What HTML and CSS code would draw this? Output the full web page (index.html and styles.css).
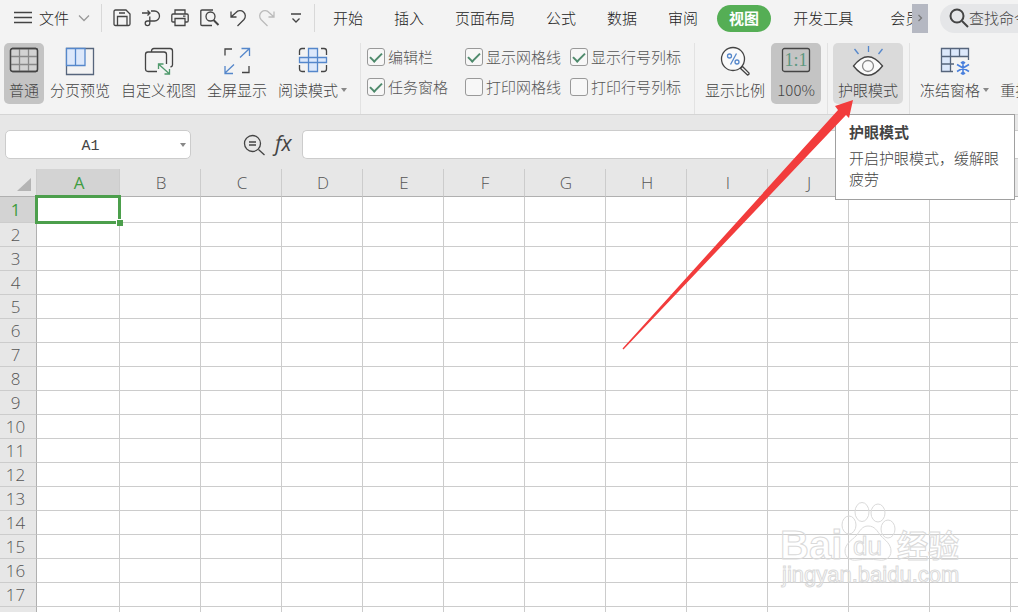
FILE: index.html
```html
<!DOCTYPE html>
<html lang="zh-CN">
<head>
<meta charset="utf-8">
<title>表格</title>
<link rel="stylesheet" href="styles.css">
</head>
<body>
<header class="topbar">
  <button class="file-menu" type="button">
    <svg class="burger" viewBox="0 0 20 20"><path d="M1 4.500h18M1 9.500h18M1 14.500h18"/></svg>
    <span>文件</span>
    <svg class="chevron" viewBox="0 0 12 12"><path d="M1 3.500l5 5 5-5"/></svg>
  </button>
  <div class="quick">
    <button type="button" aria-label="保存"><svg viewBox="0 0 20 20"><path d="M3.500 2h10.500l4 4v10q0 1.500-1.500 1.500h-13q-1.500 0-1.500-1.500V3.500Q2 2 3.500 2zM5.500 17.500V8.500h9.500v9M7 5h6"/></svg></button>
    <button type="button" aria-label="输出"><svg viewBox="0 0 20 20"><path d="M1 5h8M6.500 2.500L9 5 6.500 7.500M10 3h3.500a4.700 4.700 0 0 1 0 10H6.500a2.300 2.300 0 1 0 2.300 2.300V8.500"/></svg></button>
    <button type="button" aria-label="打印"><svg viewBox="0 0 20 20"><path d="M5 6V2h10v4M5 14H3q-1.200 0-1.200-1.200V7.200Q1.800 6 3 6h14q1.200 0 1.200 1.200v5.600Q18.200 14 17 14h-2M5 10.500h10V17.500H5zM13 8.200h2.500"/></svg></button>
    <button type="button" aria-label="打印预览"><svg viewBox="0 0 20 20"><path d="M14 2H3q-1.200 0-1.200 1.200v13q0 1.300 1.200 1.300h10"/><circle cx="11.500" cy="8.500" r="4.500"/><path d="M14.500 12l5 5" stroke-width="2"/></svg></button>
    <button type="button" aria-label="撤销"><svg viewBox="0 0 20 20"><path d="M3 3.500v5.500h5.500M3 9L8 4.500a5.200 5.200 0 0 1 8 7l-6.500 6.500"/></svg></button>
    <button class="off" type="button" aria-label="恢复"><svg viewBox="0 0 20 20"><path d="M17 3.500v5.500h-5.500M17 9L12 4.500a5.200 5.200 0 0 0-8 7l6.500 6.500"/></svg></button>
    <button type="button" aria-label="更多"><svg viewBox="0 0 20 20"><path d="M5 6h10M6.500 10.500l3.500 3.500 3.500-3.500"/></svg></button>
  </div>
  <nav class="tabs">
    <button type="button">开始</button>
    <button type="button">插入</button>
    <button type="button">页面布局</button>
    <button type="button">公式</button>
    <button type="button">数据</button>
    <button type="button">审阅</button>
    <button class="active" type="button">视图</button>
    <button class="wide" type="button">开发工具</button>
    <button class="wide" type="button">会员</button>
  </nav>
  <button class="tab-scroll" type="button" aria-label="向右滚动"><svg viewBox="0 0 16 16"><path d="M6.500 5l3 3-3 3"/></svg></button>
  <label class="search">
    <svg viewBox="0 0 20 20"><circle cx="8" cy="8" r="6.500"/><path d="M13 13l6 6"/></svg>
    <input type="text" value="查找命令" aria-label="查找命令">
  </label>
</header>

<section class="ribbon">
  <button class="tool pressed normal" type="button">
    <svg viewBox="0 0 32 32"><rect class="lt" x="2.500" y="2.500" width="27" height="23" rx="2"/><path class="thin" d="M11.500 3v22M20.500 3v22M3 10.500h26M3 18.500h26"/><rect x="2.500" y="2.500" width="27" height="23" rx="2"/></svg>
    <span>普通</span>
  </button>
  <button class="tool" type="button">
    <svg viewBox="0 0 32 32"><path class="slate" d="M2.500 2.500h27v26h-27z"/><path class="blue fill" d="M2.500 2.500h18.500v17H2.500zM11.500 2.500v17"/></svg>
    <span>分页预览</span>
  </button>
  <button class="tool" type="button">
    <svg viewBox="0 0 32 32"><path d="M8.500 6V5q0-2.500 2.500-2.500h16q2.500 0 2.500 2.500v14q0 1.500-2 2M14 25.500H5q-2.500 0-2.500-2.500V8.500Q2.500 6 5 6h16q2.500 0 2.500 2.500V18"/><path class="green" d="M16 18.500l10 9M15.500 23v-5h5M26.500 23v5h-5"/></svg>
    <span>自定义视图</span>
  </button>
  <button class="tool" type="button">
    <svg viewBox="0 0 32 32"><path d="M4 9.500V3h7M28 20v6.500h-7"/><path class="blue" d="M19 11.500L28 3M20.500 2.500h8V10M13 18.500L4 27M4 20v7.500h8"/></svg>
    <span>全屏显示</span>
  </button>
  <button class="tool" type="button">
    <svg viewBox="0 0 32 32"><path d="M2.500 9V5q0-2.500 2.500-2.500h3M24 2.500h3q2.500 0 2.500 2.500v4M29.500 19v4q0 2.500-2.500 2.500h-3M8 25.500H5q-2.500 0-2.500-2.500v-4"/><path class="blue fill" d="M11.500 2.500h9v23h-9zM2.500 11.500h27v5h-27zM11.500 11.500v5M20.500 11.500v5"/></svg>
    <span class="drop">阅读模式</span>
  </button>
  <i class="sep first"></i>
  <div class="checks">
    <label><input type="checkbox" checked>编辑栏</label>
    <label><input type="checkbox" checked>显示网格线</label>
    <label><input type="checkbox" checked>显示行号列标</label>
    <label><input type="checkbox" checked>任务窗格</label>
    <label><input type="checkbox">打印网格线</label>
    <label><input type="checkbox">打印行号列标</label>
  </div>
  <i class="sep"></i>
  <button class="tool" type="button">
    <svg viewBox="0 0 32 32"><circle class="lt" cx="14" cy="13" r="11.500"/><path d="M21.500 22.500l2-2 6.500 6.500q.5 1.500-1.500 2z"/><path class="blue" d="M17.500 7.500l-6 11"/><circle class="blue" cx="10.500" cy="10" r="2"/><circle class="blue" cx="18" cy="16" r="2"/></svg>
    <span>显示比例</span>
  </button>
  <button class="tool pressed ratio" type="button">
    <svg viewBox="0 0 32 32"><rect x="2.500" y="2.500" width="27" height="23" rx="2"/><text x="16" y="20" text-anchor="middle">1:1</text></svg>
    <span>100%</span>
  </button>
  <i class="sep"></i>
  <div class="tip-anchor">
    <button class="tool hover" type="button" aria-describedby="eye-tip">
      <svg viewBox="0 0 32 32"><path class="lt" d="M1.500 20Q16 1.500 30.500 20 16 38.500 1.500 20z"/><circle class="thin" cx="16" cy="20" r="5.500"/><path class="blue" d="M16.500 0v6M2.500 3l4 5M30.500 3l-4 5"/></svg>
      <span>护眼模式</span>
    </button>
    <div class="tip" id="eye-tip" role="tooltip"><b>护眼模式</b><p>开启护眼模式，缓解眼疲劳</p></div>
  </div>
  <i class="sep"></i>
  <button class="tool" type="button">
    <svg viewBox="0 0 32 32"><path class="blue fill nostroke" d="M3 3h26v7H11v15H3z"/><path class="slate" d="M14 25.500H2.500v-23h27V14M11.500 3v22M20.500 3v8M3 10.500h26M3 18h12"/><path class="snow" d="M24 15v14M18 18.500l12 7M18 25.500l12-7M22 16l2 2 2-2M22 28l2-2 2 2"/></svg>
    <span class="drop">冻结窗格</span>
  </button>
  <button class="tool" type="button">
    <svg viewBox="0 0 32 32"></svg>
    <span>重排窗口</span>
  </button>
</section>

<section class="formula">
  <label class="name-box"><input type="text" value="A1" aria-label="名称框"></label>
  <button type="button" aria-label="查找"><svg viewBox="0 0 22 22"><circle cx="9.500" cy="9.500" r="8"/><path d="M15.500 15.500l6 5.500M6 8h7M6 11h7"/></svg></button>
  <button class="fx" type="button">fx</button>
  <input class="formula-input" type="text" aria-label="编辑栏">
</section>

<main class="sheet">
  <table>
    <colgroup><col class="c-row"><col class="c-first"><col span="12" class="c-std"></colgroup>
    <thead>
      <tr><th class="corner"><svg viewBox="0 0 14 13"><path d="M14 0v13H0z"/></svg></th><th class="sel">A</th><th>B</th><th>C</th><th>D</th><th>E</th><th>F</th><th>G</th><th>H</th><th>I</th><th>J</th><th></th><th></th><th></th></tr>
    </thead>
    <tbody>
      <tr><th class="sel">1</th><td class="cursor"></td><td></td><td></td><td></td><td></td><td></td><td></td><td></td><td></td><td></td><td></td><td></td><td></td></tr>
      <tr><th>2</th><td></td><td></td><td></td><td></td><td></td><td></td><td></td><td></td><td></td><td></td><td></td><td></td><td></td></tr>
      <tr><th>3</th><td></td><td></td><td></td><td></td><td></td><td></td><td></td><td></td><td></td><td></td><td></td><td></td><td></td></tr>
      <tr><th>4</th><td></td><td></td><td></td><td></td><td></td><td></td><td></td><td></td><td></td><td></td><td></td><td></td><td></td></tr>
      <tr><th>5</th><td></td><td></td><td></td><td></td><td></td><td></td><td></td><td></td><td></td><td></td><td></td><td></td><td></td></tr>
      <tr><th>6</th><td></td><td></td><td></td><td></td><td></td><td></td><td></td><td></td><td></td><td></td><td></td><td></td><td></td></tr>
      <tr><th>7</th><td></td><td></td><td></td><td></td><td></td><td></td><td></td><td></td><td></td><td></td><td></td><td></td><td></td></tr>
      <tr><th>8</th><td></td><td></td><td></td><td></td><td></td><td></td><td></td><td></td><td></td><td></td><td></td><td></td><td></td></tr>
      <tr><th>9</th><td></td><td></td><td></td><td></td><td></td><td></td><td></td><td></td><td></td><td></td><td></td><td></td><td></td></tr>
      <tr><th>10</th><td></td><td></td><td></td><td></td><td></td><td></td><td></td><td></td><td></td><td></td><td></td><td></td><td></td></tr>
      <tr><th>11</th><td></td><td></td><td></td><td></td><td></td><td></td><td></td><td></td><td></td><td></td><td></td><td></td><td></td></tr>
      <tr><th>12</th><td></td><td></td><td></td><td></td><td></td><td></td><td></td><td></td><td></td><td></td><td></td><td></td><td></td></tr>
      <tr><th>13</th><td></td><td></td><td></td><td></td><td></td><td></td><td></td><td></td><td></td><td></td><td></td><td></td><td></td></tr>
      <tr><th>14</th><td></td><td></td><td></td><td></td><td></td><td></td><td></td><td></td><td></td><td></td><td></td><td></td><td></td></tr>
      <tr><th>15</th><td></td><td></td><td></td><td></td><td></td><td></td><td></td><td></td><td></td><td></td><td></td><td></td><td></td></tr>
      <tr><th>16</th><td></td><td></td><td></td><td></td><td></td><td></td><td></td><td></td><td></td><td></td><td></td><td></td><td></td></tr>
      <tr><th>17</th><td></td><td></td><td></td><td></td><td></td><td></td><td></td><td></td><td></td><td></td><td></td><td></td><td></td></tr>
      <tr><th></th><td></td><td></td><td></td><td></td><td></td><td></td><td></td><td></td><td></td><td></td><td></td><td></td><td></td></tr>
    </tbody>
  </table>
  <svg class="watermark" viewBox="0 0 190 92" role="img" aria-label="Baidu">
    <g><ellipse cx="73" cy="35" rx="7" ry="9"/><ellipse cx="86" cy="22" rx="7" ry="9.500"/><ellipse cx="102" cy="23" rx="7" ry="9"/><ellipse cx="112" cy="39" rx="7" ry="9"/><path d="M92 36c7 0 9 5 13 10 4 4 10 8 10 15 0 7-6 10-12 9-8-1-14-1-22 0-6 1-12-2-12-9 0-7 7-11 11-15 4-5 6-10 12-10z"/></g>
    <text x="4" y="69" class="w-big">Bai</text>
    <text x="77" y="65" class="w-du">du</text>
    <text x="121" y="67" class="w-cn">经验</text>
    <text x="6" y="92" class="w-url">jingyan.baidu.com</text>
  </svg>
</main>
<svg class="arrow" viewBox="0 0 232 252" aria-hidden="true"><path d="M231 1l-18 6 3 4L.5 249.500l1 1L224 16l3 3z"/></svg>
</body>
</html>
```

FILE: styles.css
```css
* { box-sizing: border-box; }
body {
  margin: 0;
  height: 100vh;
  overflow: hidden;
  position: relative;
  display: flex;
  flex-direction: column;
  background: #fff;
  color: #444;
  font: 300 15px/20px "Noto Sans CJK SC", sans-serif;
}
button, input { font: inherit; color: inherit; }
button { border: 0; padding: 0; background: none; white-space: nowrap; }
svg { fill: none; stroke: #444; stroke-width: 1.3; display: block; flex: none; overflow: visible; }

.topbar { display: flex; align-items: center; height: 38px; flex: none; padding-bottom: 2px; background: #f3f3f3; }
.file-menu { display: flex; align-items: center; gap: 6px; padding: 0 11px 0 13px; height: 28px; color: #222; border-right: 1px solid #d8d8d8; }
.burger { width: 20px; height: 20px; }
.chevron { width: 12px; height: 12px; margin-left: 3px; stroke: #999; }
.quick { display: flex; align-items: center; gap: 9px; height: 28px; padding: 0 8px 0 10px; border-right: 1px solid #d8d8d8; }
.quick svg { width: 20px; height: 20px; }
.off svg { stroke: #bbb; }
.tabs { display: flex; gap: 7px; flex: 1; min-width: 0; overflow: hidden; padding-left: 6px; color: #222; }
.tabs button { padding: 0 12px; height: 27px; border-radius: 14px; flex: none; }
.tabs .active { background: #55ae55; color: #fff; font-weight: 700; }
.tabs .wide { padding: 0 15px; }
.tab-scroll { width: 16px; height: 29px; background: #b5b8c2; flex: none; }
.tab-scroll svg { stroke: #777; width: 16px; height: 16px; }
.search { display: flex; align-items: center; flex: none; width: 78px; height: 29px; margin-left: 12px; padding-left: 9px; background: #e5e6e8; border-radius: 15px 0 0 15px; }
.search svg { width: 20px; height: 20px; stroke-width: 2; }
.search input { width: 49px; min-width: 0; border: 0; padding: 0; background: none; }

.ribbon { display: flex; gap: 1px; height: 77px; flex: none; padding: 5px 0 0 4px; background: #f3f3f3; border-bottom: 1px solid #d5d5d5; }
.tool { display: flex; flex-direction: column; align-items: center; gap: 2px; flex: none; height: 61px; padding: 3px 5px 0; border-radius: 5px; }
.tool svg { width: 32px; height: 32px; }
.tool .lt { fill: #fafafa; }
.tool .thin { stroke: #888; }
.tool .slate { stroke: #56657c; }
.tool .blue { stroke: #5587cb; }
.tool .fill { fill: #dce8fb; }
.tool .nostroke { stroke: none; }
.tool .green { stroke: #4f9a6c; }
.tool .snow { stroke: #4a80dd; stroke-width: 1.6; }
.tool text { fill: #5c9880; stroke: none; font: 18px "Liberation Serif", serif; }
.pressed { background: #c4c4c4; }
.tool.pressed .lt { fill: #d2d2d2; }
.hover { background: #dadada; }
.normal { width: 40px; }
.ratio { width: 50px; }
.drop { display: flex; align-items: center; gap: 3px; }
.drop::after, .name-box::after { content: ""; border: 3px solid transparent; border-top: 4px solid #888; border-bottom: 0; }
.sep { width: 1px; flex: none; height: 71px; margin: 0 4px 0 5px; background: #e2e2e2; }
.sep.first { margin-left: 7px; }
.checks { display: grid; grid-template-columns: 98px 105px max-content; grid-auto-rows: 30px; flex: none; height: 60px; margin-top: -1px; padding: 0 7px 0 1px; color: #555; }
.checks label { display: flex; align-items: center; gap: 3px; white-space: nowrap; }
.checks input { appearance: none; width: 18px; height: 18px; margin: 0; border: 1px solid #999; border-radius: 3px; background: #f7f7f7; display: grid; place-content: center; }
.checks input:checked::after { content: ""; width: 10px; height: 5px; border: solid #4e8a6c; border-width: 0 0 2px 2px; transform: rotate(-45deg) translate(1px, -1px); }

.tip-anchor { position: relative; flex: none; }
.tip { position: absolute; z-index: 2; left: 2px; top: 71px; width: 180px; padding: 6px 13px 10px; background: #fff; border: 1px solid #a0a0a0; line-height: 21px; }
.tip b { font-weight: 700; }
.tip p { margin: 5px 0 0; }

.formula { display: flex; align-items: center; height: 54px; flex: none; padding: 5px 0 0 5px; background: #e7e7e7; }
.name-box { display: flex; align-items: center; width: 186px; height: 29px; padding: 0 4px 0 0; background: #fff; border: 1px solid #ccc; border-radius: 5px; margin-right: 52px; }
.name-box input { flex: 1; min-width: 0; border: 0; padding: 3px 5px 0 0; background: none; text-align: center; font: 15px "Liberation Mono", monospace; }
.formula svg { width: 22px; height: 22px; }
.fx { padding: 0 10px 3px; font: italic 21px/24px "Open Sans", sans-serif; }
.formula-input { flex: 1; height: 29px; border: 1px solid #ccc; border-right: 0; border-radius: 5px 0 0 5px; background: #fff; }

.sheet { flex: 1; min-height: 0; overflow: hidden; position: relative; }
table { table-layout: fixed; width: 1092px; border-collapse: separate; border-spacing: 0; font: 300 17px/20px "Open Sans", sans-serif; }
.c-row { width: 37px; }
.c-first { width: 83px; }
.c-std { width: 81px; }
th, td { height: 24px; padding: 0; border: solid #ccc; border-width: 0 1px 1px 0; }
th { background: #e7e7e7; color: #555; font-weight: 300; }
thead th { height: 28px; padding-left: 2px; border-bottom-color: #b0b0b0; }
tbody th { padding-right: 5px; border-right-color: #b0b0b0; }
.corner svg { width: 14px; height: 13px; margin: 4px 5px 0 auto; fill: #b4b4b4; stroke: none; }
th.sel { background: #d3d3d3; color: #3f9c3f; font-weight: 400; }
tbody tr:first-child > * { height: 26px; }
.cursor { position: relative; }
.cursor::before { content: ""; position: absolute; inset: -2px; border: 3px solid #4c9f4c; }
.cursor::after { content: ""; position: absolute; right: -4px; bottom: -4px; width: 6px; height: 6px; background: #4c9f4c; border: solid #fff; border-width: 1px 0 0 1px; }

.watermark { position: absolute; right: 52px; bottom: 30px; width: 190px; height: 92px; fill: none; stroke: #dadada; stroke-width: 1; }
.w-big { font: 700 40px "Liberation Sans", sans-serif; }
.w-du { font: 400 26px "Liberation Sans", sans-serif; }
.w-cn { font: 700 31px "Noto Sans CJK SC", sans-serif; }
.w-url { font: 400 22px "Liberation Sans", sans-serif; }
.arrow { position: absolute; z-index: 3; left: 622px; top: 99px; width: 232px; height: 252px; fill: #f23c3c; stroke: none; pointer-events: none; }
```
